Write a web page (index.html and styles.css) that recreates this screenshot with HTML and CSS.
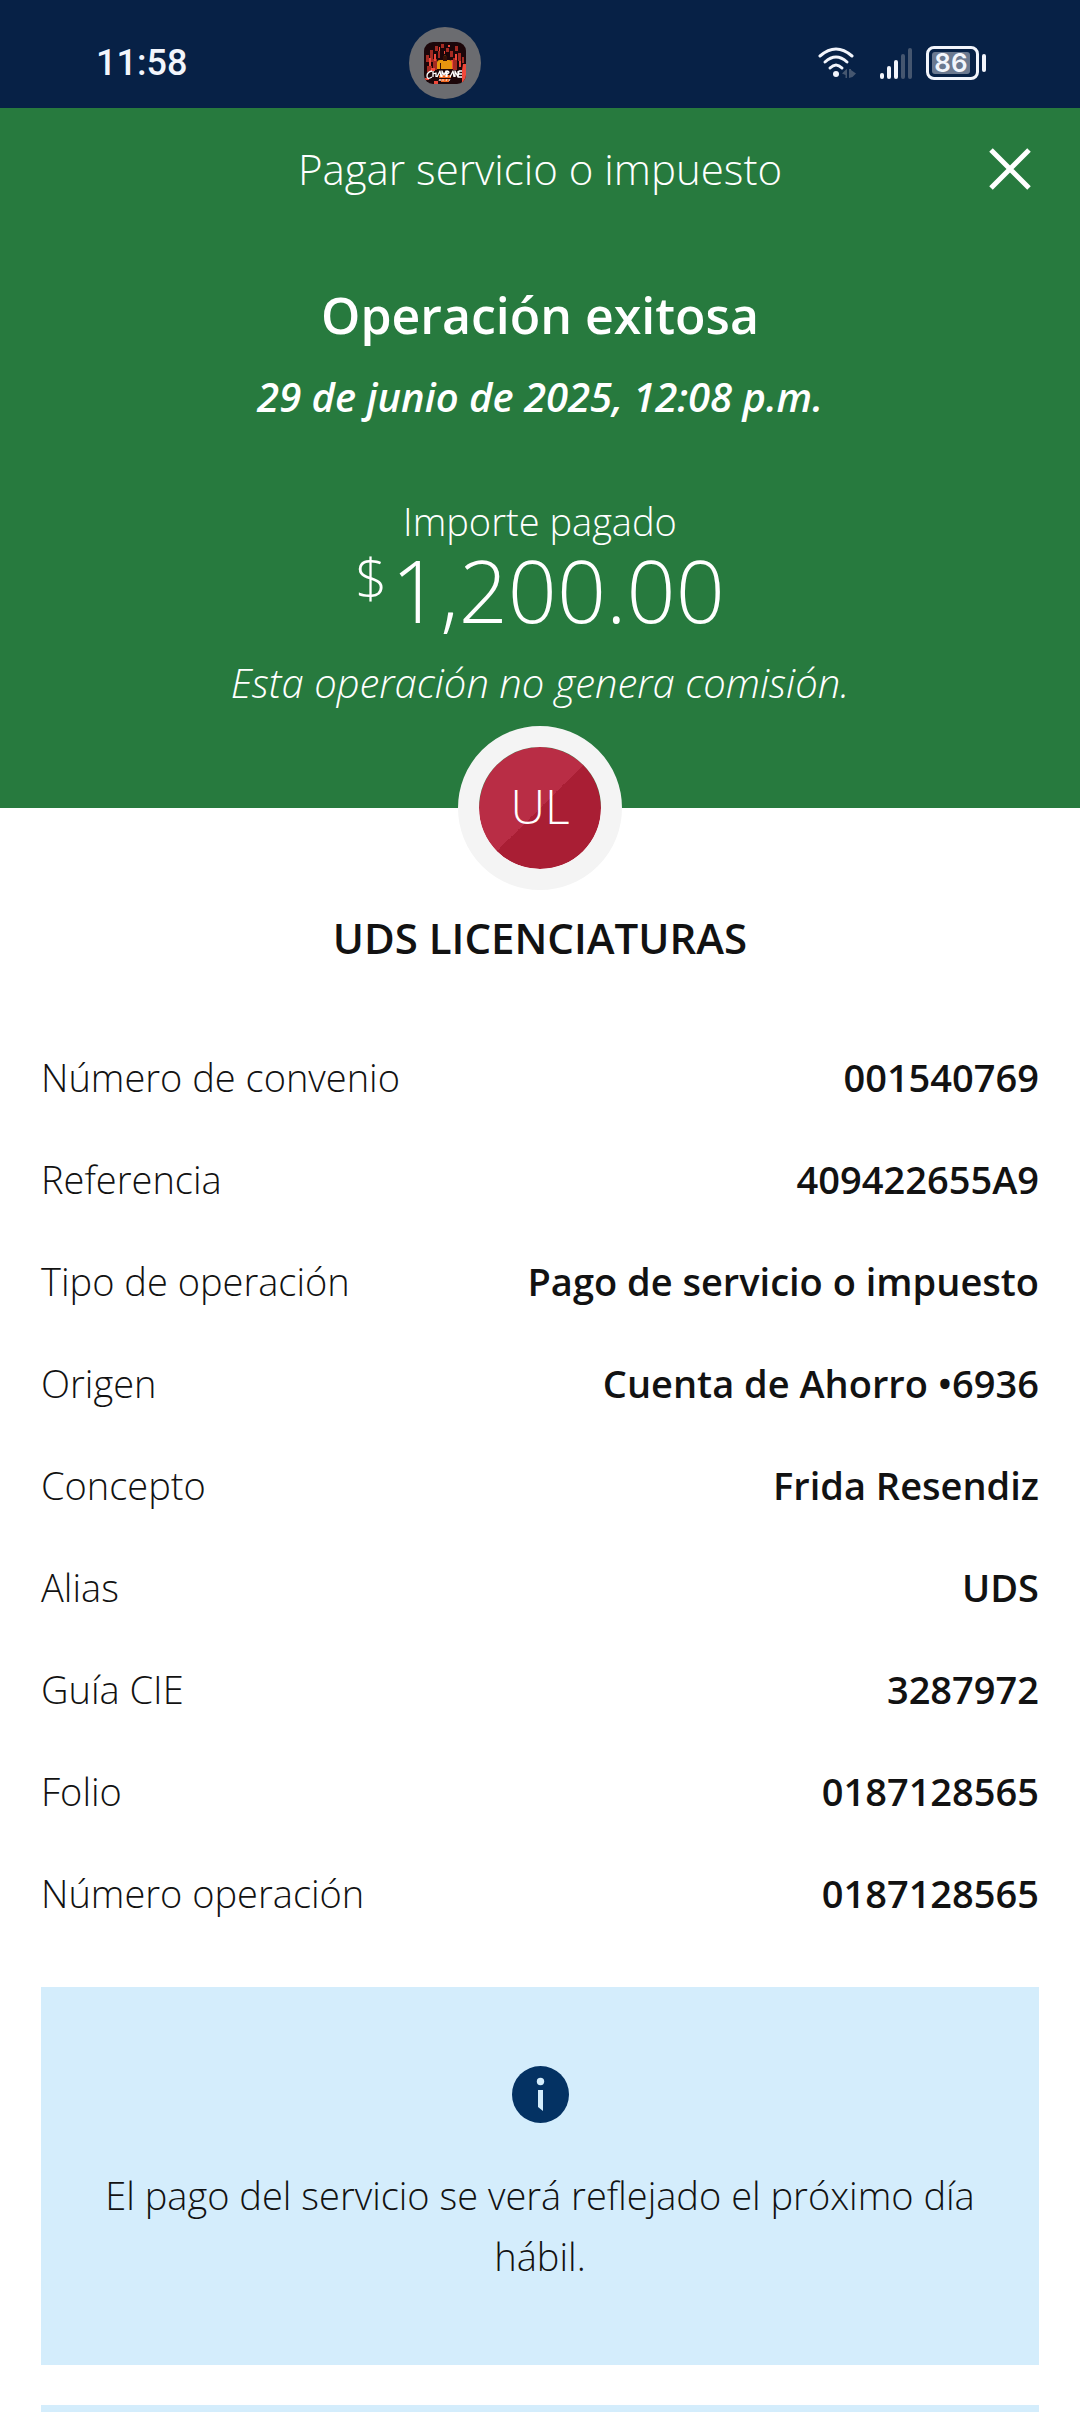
FILE: index.html
```html
<!DOCTYPE html>
<html lang="es">
<head>
    <meta charset="UTF-8">
    <meta name="viewport" content="width=device-width, initial-scale=1.0">
    <title>Pagar servicio o impuesto</title>
    <link rel="stylesheet" href="styles.css">
</head>
<body>

    <div class="status-bar">
        <span class="time">11:58</span>
        <div class="island">
            <svg class="cover" viewBox="0 0 42 42" aria-hidden="true">
                <defs>
                    <clipPath id="cover-clip"><rect width="42" height="42" rx="9"/></clipPath>
                </defs>
                <g clip-path="url(#cover-clip)">
                    <rect width="42" height="42" fill="#1c0609"/>
                    <path fill="#a52a22" d="M2 13h3v7H2zM6 8h3v12H6zM9 17h4v11H9zM11 4h3v5h-3zM14 9h2v7h-2zM3 24h5v6H3zM17 2h3v4h-3zM22 6h3v4h-3zM26 9h3v6h-3zM31 4h3v5h-3zM34 11h3v8h-3zM29 16h4v12h-4zM38 15h2v6h-2z"/>
                    <path fill="#f0483a" d="M5 16h2v8H5zM10 12h2v7h-2zM7 26h4v3H7zM27 18h2v9h-2zM31 12h2v6h-2zM35 19h2v6h-2zM39 22h3v18h-4V28zM15 5h1v4h-1zM24 3h2v2h-2zM20 9h1v3h-1zM1 36h4v2H1zM10 39h4v3h-4z"/>
                    <path fill="#e8960f" d="M13 27V21q0-3 3-3h3v-3q2-3 4 0v3h2q3 0 3 3v6z"/>
                    <path fill="#351006" d="M19 14h4v5h-4zM16 21h1v6h-1z"/>
                    <path fill="#f46a20" d="M15 33h12v3H15zM17 37h8v3h-8z"/>
                    <path fill="none" stroke="#fff" stroke-width="1.300" stroke-linejoin="round" d="M8 29q-5 1-5 5t5 1M9 29v6m0-3l3-1v4M13 35l3-6 1 6M18 35v-6l2 4 2-4v6M23 35v-6q4 1 0 3M26 35l3-6 1 6M31 35v-6l3 6v-6M38 29h-3l-1 6h4M35 32h3"/>
                    <path fill="none" stroke="#f3dada" d="M15 39l1-2 1 2M19 37v2M22 39l1-2M26 37l-1 2"/>
                </g>
            </svg>
        </div>
        <div class="status-icons">
            <svg class="wifi" viewBox="0 0 38 34" role="img" aria-label="Wi-Fi">
                <g fill="none" stroke="#f2f5fc" stroke-width="3" stroke-linecap="round">
                    <path d="M2 10Q18 -4 34 10"/>
                    <path d="M7 16Q18 6 29 16"/>
                    <path d="M12 22Q18 16 24 22"/>
                </g>
                <circle cx="18" cy="28" r="3" fill="#f2f5fc"/>
                <path fill="#45566f" d="M29 23v9h-1.500v-3L24 27.500l3.500-3.500zM31 23h2v1l5 3.500-3.500 3.500L31 32z"/>
            </svg>
            <svg class="signal" viewBox="0 0 34 34" role="img" aria-label="Señal móvil">
                <g fill="#f2f5fc">
                    <rect x="0" y="27" width="4" height="6" rx="2"/>
                    <rect x="7" y="20" width="4" height="13" rx="2"/>
                    <rect x="14" y="14" width="4" height="19" rx="2"/>
                </g>
                <g fill="#45566f">
                    <rect x="21" y="8" width="4" height="25" rx="2"/>
                    <rect x="28" y="2" width="4" height="31" rx="2"/>
                </g>
            </svg>
            <div class="battery">
                <span class="battery-level">86</span>
            </div>
        </div>
    </div>

    <header class="hero">
        <div class="top-bar">
            <h1 class="title">Pagar servicio o impuesto</h1>
            <button class="close" type="button" aria-label="Cerrar">
                <svg viewBox="0 0 44 44" aria-hidden="true">
                    <path d="M3 3L41 41M41 3L3 41" stroke="#fff" stroke-width="5"/>
                </svg>
            </button>
        </div>
        <h2 class="result">Operación exitosa</h2>
        <p class="date">29 de junio de 2025, 12:08 p.m.</p>
        <p class="amount-label">Importe pagado</p>
        <p class="amount"><span class="currency">$</span>1,200.00</p>
        <p class="fee">Esta operación no genera comisión.</p>
    </header>

    <main class="content">
        <div class="avatar">UL</div>
        <h2 class="company">UDS LICENCIATURAS</h2>

        <dl class="details">
            <div class="row"><dt>Número de convenio</dt><dd>001540769</dd></div>
            <div class="row"><dt>Referencia</dt><dd>409422655A9</dd></div>
            <div class="row"><dt>Tipo de operación</dt><dd>Pago de servicio o impuesto</dd></div>
            <div class="row"><dt>Origen</dt><dd>Cuenta de Ahorro •6936</dd></div>
            <div class="row"><dt>Concepto</dt><dd>Frida Resendiz</dd></div>
            <div class="row"><dt>Alias</dt><dd>UDS</dd></div>
            <div class="row"><dt>Guía CIE</dt><dd>3287972</dd></div>
            <div class="row"><dt>Folio</dt><dd>0187128565</dd></div>
            <div class="row"><dt>Número operación</dt><dd>0187128565</dd></div>
        </dl>

        <section class="notice">
            <svg class="info-icon" viewBox="0 0 57 57" aria-hidden="true">
                <circle cx="28.500" cy="28.500" r="28.500" fill="#043263"/>
                <circle cx="28.500" cy="15.500" r="3.700" fill="#d4edfc"/>
                <path d="M26 24h5v21l-5-4z" fill="#d4edfc"/>
            </svg>
            <p>El pago del servicio se verá reflejado el próximo día hábil.</p>
        </section>
        <section class="notice-next"></section>
    </main>

</body>
</html>
```
FILE: styles.css
```css
* {
    box-sizing: border-box;
}
body {
    margin: 0;
    min-height: 100vh;
    display: flex;
    flex-direction: column;
    font-family: "Open Sans", "Noto Sans", sans-serif;
    font-size: 38px;
    font-weight: 300;
    line-height: 60px;
    color: #121212;
    background-color: #fff;
}
h1, h2, p, dl, dd {
    margin: 0;
}

/* status bar */
.status-bar {
    display: grid;
    grid-template-columns: 31fr 72px 50fr;
    align-items: center;
    height: 108px;
    padding: 18px 94px 0 96px;
    background-color: #072146;
    color: #f2f5fc;
}
.time {
    font-family: Roboto, sans-serif;
    font-size: 36px;
    font-weight: 500;
}
.island {
    display: flex;
    align-items: center;
    justify-content: center;
    width: 72px;
    height: 72px;
    border-radius: 50%;
    background-color: #6b6c70;
}
.cover {
    width: 42px;
    height: 42px;
}
.status-icons {
    display: flex;
    align-items: center;
    justify-content: flex-end;
}
.wifi {
    width: 38px;
    height: 34px;
    margin-right: 24px;
}
.signal {
    width: 34px;
    height: 34px;
    margin-right: 12px;
}
.battery {
    position: relative;
    width: 53px;
    height: 34px;
    margin-right: 7px;
    padding: 3px;
    border: 3px solid #f2f5fc;
    border-radius: 8px;
}
.battery::after {
    content: "";
    position: absolute;
    top: 5px;
    right: -10px;
    width: 4px;
    height: 18px;
    border-radius: 2px;
    background-color: #f2f5fc;
}
.battery-level {
    display: block;
    width: 38px;
    height: 22px;
    border-radius: 3px;
    background-color: #6b7990;
    font-family: Inter, sans-serif;
    font-size: 26px;
    font-weight: 600;
    line-height: 22px;
    text-align: center;
}

/* green header */
.hero {
    height: 700px;
    background-color: #277a3e;
    color: #fff;
    text-align: center;
}
.top-bar {
    display: grid;
    grid-template-columns: 92px 1fr 92px;
    align-items: center;
    height: 122px;
}
.title {
    grid-column: 2;
    font-size: 42px;
    font-weight: 300;
    line-height: 56px;
}
.close {
    width: 44px;
    height: 44px;
    padding: 0;
    border: none;
    background: none;
    cursor: pointer;
}
.close svg {
    display: block;
}
.result {
    margin-top: 51px;
    font-size: 50px;
    font-weight: 600;
    line-height: 68px;
}
.date {
    margin-top: 18px;
    font-size: 40px;
    font-weight: 600;
    font-style: italic;
}
.amount-label {
    margin-top: 64px;
}
.amount {
    display: flex;
    justify-content: center;
    font-size: 86px;
    line-height: 78px;
}
.currency {
    margin-right: 4px;
    font-size: 56px;
    line-height: 50px;
}
.fee {
    margin-top: 24px;
    font-size: 40px;
    font-style: italic;
}

/* receipt */
.content {
    flex: 1;
    display: flex;
    flex-direction: column;
    padding: 0 41px;
}
.avatar {
    align-self: center;
    width: 164px;
    height: 164px;
    margin-top: -82px;
    border: 21px solid #f4f4f4;
    border-radius: 50%;
    background: linear-gradient(135deg, #b92d45 50%, #a91e34 50%) padding-box;
    color: #fff;
    font-size: 48px;
    line-height: 118px;
    text-align: center;
}
.company {
    margin-top: 18px;
    font-size: 42px;
    font-weight: 600;
    text-align: center;
}
.details {
    margin-top: 58px;
}
.row {
    display: flex;
    justify-content: space-between;
    padding: 21px 0;
}
.row dd {
    font-weight: 600;
    text-align: right;
}
.notice, .notice-next {
    background-color: #d4edfc;
}
.notice {
    margin-top: 43px;
    padding: 79px 60px 78px;
    text-align: center;
}
.info-icon {
    display: block;
    width: 57px;
    height: 57px;
    margin: 0 auto 42px;
}
.notice p {
    line-height: 61px;
}
.notice-next {
    flex: 1;
    margin-top: 40px;
}
```
